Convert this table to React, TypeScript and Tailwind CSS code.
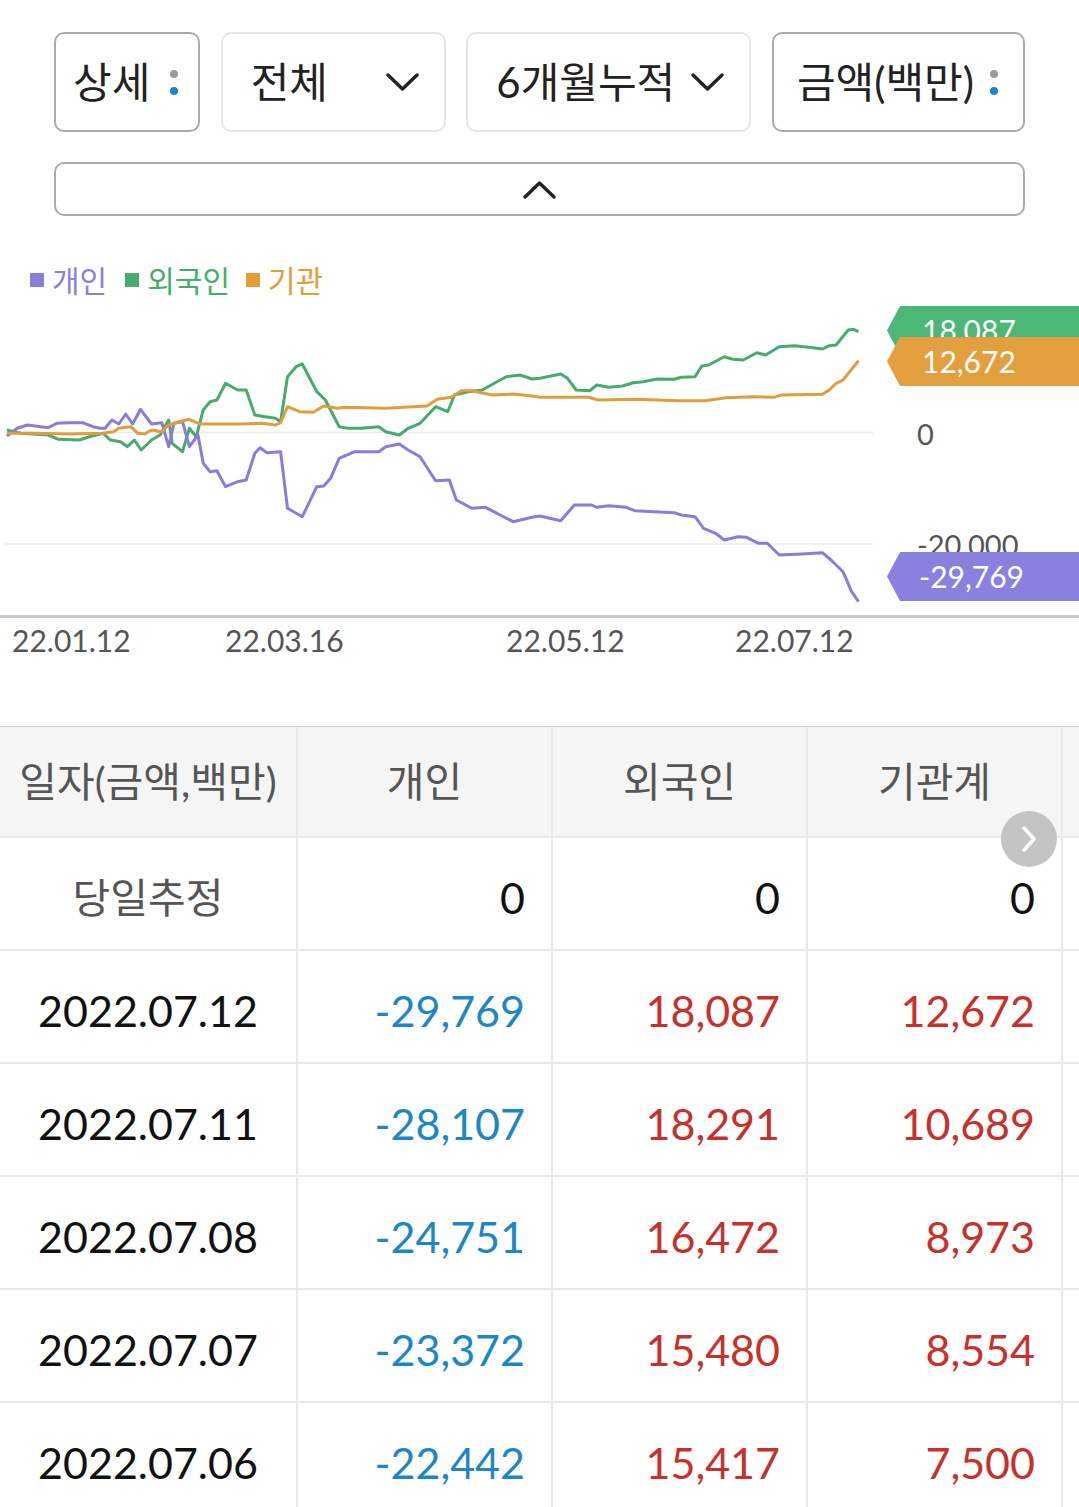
import React from "react";

const FONT = "[font-family:Lato,'Noto_Sans_CJK_KR',sans-serif]";

// chart points read off the screenshot, left half and right half
const greenL = [[20,390],[60,400],[140,405],[170,418],[230,420],[260,410],[300,400],[320,420],[350,425],[370,440],[390,420],[410,450],[440,420],[465,405],[490,360],[500,430],[530,455],[550,385],[570,410],[590,330],[610,305],[630,300],[655,250],[690,270],[715,270],[740,345],[770,350],[800,355],[815,365],[835,230],[860,200],[878,192],[920,275],[945,300],[985,380],[1010,385],[1050,385],[1100,380],[1120,395],[1160,405],[1185,385],[1220,370],[1265,320],[1300,335],[1320,285],[1360,275],[1400,270],[1470,230],[1510,225],[1545,237]];
const greenR = [[0,235],[60,222],[80,235],[105,270],[145,272],[165,255],[200,262],[240,258],[270,248],[300,245],[340,237],[390,238],[410,232],[450,230],[470,198],[490,195],[535,170],[560,178],[590,180],[630,158],[655,165],[695,140],[740,137],[780,142],[820,147],[840,137],[860,135],[895,90],[910,88],[925,95]];
const orangeL = [[20,400],[100,400],[200,402],[300,400],[330,395],[345,385],[380,380],[400,400],[420,402],[440,390],[470,395],[490,375],[520,365],[550,358],[580,372],[700,372],[760,370],[800,375],[815,368],[835,320],[870,335],[910,337],[940,318],[980,325],[1000,322],[1120,325],[1240,318],[1270,298],[1310,292],[1340,272],[1370,272],[1430,285],[1490,282],[1545,288]];
const orangeR = [[0,292],[140,292],[170,300],[280,298],[400,302],[480,302],[540,293],[620,290],[680,292],[700,285],[820,283],[840,270],[860,250],[880,240],[925,182]];
const purpleL = [[20,408],[50,385],[80,375],[140,383],[165,370],[200,368],[240,368],[270,380],[290,385],[305,385],[325,360],[345,372],[365,342],[385,372],[408,328],[440,372],[470,368],[490,440],[505,370],[530,365],[550,440],[575,405],[590,490],[610,515],[630,512],[655,560],[690,545],[715,540],[740,460],[755,443],[775,458],[815,455],[835,625],[878,650],[920,560],[940,558],[960,535],[985,475],[1030,455],[1100,455],[1120,440],[1160,432],[1185,450],[1220,470],[1265,542],[1305,540],[1325,600],[1370,625],[1410,622],[1490,665],[1545,652]];
const purpleR = [[0,648],[60,662],[100,615],[150,615],[165,622],[200,617],[250,622],[275,632],[390,638],[410,645],[450,650],[475,685],[510,700],[535,720],[575,710],[600,712],[635,730],[660,730],[695,765],[760,762],[820,758],[845,780],[880,815],[905,875],[925,905]];

const pts = (l: number[][], r: number[][]) =>
  [...l.map(([x, y]) => [x / 2.904, y / 3]), ...r.map(([x, y]) => [540 + x / 2.904, y / 3])]
    .map(([x, y]) => `${x.toFixed(1)},${y.toFixed(1)}`)
    .join(" ");

const rows = [
  ["2022.07.12", "-29,769", "18,087", "12,672"],
  ["2022.07.11", "-28,107", "18,291", "10,689"],
  ["2022.07.08", "-24,751", "16,472", "8,973"],
  ["2022.07.07", "-23,372", "15,480", "8,554"],
  ["2022.07.06", "-22,442", "15,417", "7,500"],
];

const Dots = () => (
  <div className="flex flex-col gap-[9px]">
    <span className="h-[8px] w-[8px] rounded-full bg-[#9a9a9a]" />
    <span className="h-[8px] w-[8px] rounded-full bg-[#1f80d6]" />
  </div>
);

const Chevron = ({ up = false }: { up?: boolean }) => (
  <svg width="33" height="19" viewBox="0 0 33 19" fill="none">
    <path
      d={up ? "M2 17 L16.5 3 L31 17" : "M2 2 L16.5 16 L31 2"}
      stroke="#222"
      strokeWidth="3.4"
      strokeLinecap="round"
      strokeLinejoin="round"
    />
  </svg>
);

const Tag = ({ top, bg, pl, children }: { top: string; bg: string; pl: string; children: React.ReactNode }) => (
  <div
    className={`absolute left-[887px] right-0 flex h-[49px] items-center text-[30px] text-white [clip-path:polygon(13px_0,100%_0,100%_100%,13px_100%,0_50%)] ${top} ${bg} ${pl}`}
  >
    {children}
  </div>
);

const cell = "flex h-[113px] items-center border-b-2 border-r-2 border-[#e9e9e9] pt-[7px]";

export default function App() {
  return (
    <div className={`w-[1079px] overflow-hidden bg-white ${FONT}`}>
      {/* filters */}
      <div className="flex justify-between px-[54px] pt-[32px] text-[42px] leading-none text-[#222]">
        <div className="flex h-[100px] w-[146px] items-center gap-[20px] rounded-[10px] border-2 border-[#ababab] pl-[17px]">
          <span>상세</span>
          <Dots />
        </div>
        <div className="flex h-[100px] w-[225px] items-center justify-between rounded-[10px] border-2 border-[#e6e6e6] pl-[28px] pr-[25px]">
          <span>전체</span>
          <Chevron />
        </div>
        <div className="flex h-[100px] w-[285px] items-center justify-between rounded-[10px] border-2 border-[#e6e6e6] pl-[28px] pr-[25px]">
          <span>6개월누적</span>
          <Chevron />
        </div>
        <div className="flex h-[100px] w-[253px] items-center gap-[16px] rounded-[10px] border-2 border-[#ababab] pl-[23px]">
          <span>금액(백만)</span>
          <Dots />
        </div>
      </div>
      <div className="mx-[54px] mt-[30px] flex h-[54px] items-center justify-center rounded-[10px] border-2 border-[#ababab]">
        <Chevron up />
      </div>

      {/* legend */}
      <div className="mt-[49px] flex h-[30px] items-center pl-[30px] text-[30px] leading-none">
        <span className="h-[14px] w-[14px] bg-[#8a7fdc]" />
        <span className="ml-[8px] text-[#8a7fdc]">개인</span>
        <span className="ml-[18px] h-[14px] w-[14px] bg-[#44ad6d]" />
        <span className="ml-[8px] text-[#44ad6d]">외국인</span>
        <span className="ml-[16px] h-[14px] w-[14px] bg-[#e39c38]" />
        <span className="ml-[8px] text-[#e39c38]">기관</span>
      </div>

      {/* chart */}
      <div className="relative mt-[5px] h-[426px]">
        <svg width="1079" height="426" viewBox="0 0 1079 426" className="block">
          <line x1="5" x2="873" y1="132.5" y2="132.5" stroke="#ececec" strokeWidth="1.5" />
          <line x1="5" x2="873" y1="244" y2="244" stroke="#ececec" strokeWidth="1.5" />
          <polyline points={pts(greenL, greenR)} fill="none" stroke="#47ab6e" strokeWidth="3" strokeLinejoin="round" />
          <polyline points={pts(purpleL, purpleR)} fill="none" stroke="#8a7cdc" strokeWidth="3" strokeLinejoin="round" />
          <polyline points={pts(orangeL, orangeR)} fill="none" stroke="#e09d3c" strokeWidth="3" strokeLinejoin="round" />
          <line x1="0" x2="1079" y1="316.5" y2="316.5" stroke="#cacaca" strokeWidth="3" />
          <g fill="#555" fontSize="29">
            <text x="917" y="133" dominantBaseline="central">0</text>
            <text x="917" y="244" dominantBaseline="central">-20,000</text>
          </g>
          <g fill="#555" fontSize="30">
            <text x="12" y="340" dominantBaseline="central">22.01.12</text>
            <text x="225" y="340" dominantBaseline="central">22.03.16</text>
            <text x="506" y="340" dominantBaseline="central">22.05.12</text>
            <text x="735" y="340" dominantBaseline="central">22.07.12</text>
          </g>
        </svg>
        <Tag top="top-[6px]" bg="bg-[#4cb776]" pl="pl-[35px]">18,087</Tag>
        <Tag top="top-[37px]" bg="bg-[#e39f3e]" pl="pl-[35px]">12,672</Tag>
        <Tag top="top-[252px]" bg="bg-[#8b80de]" pl="pl-[32px]">-29,769</Tag>
      </div>

      {/* table */}
      <div className="relative border-t-[1.5px] border-[#cfcfcf]">
        <div className="grid grid-cols-[298px_255px_255px_255px_255px] text-[43px] leading-none">
          {["일자(금액,백만)", "개인", "외국인", "기관계", ""].map((h, i) => (
            <div
              key={i}
              className="flex h-[111px] items-center justify-center border-b-2 border-r-2 border-[#e9e9e9] bg-[#f5f5f5] text-[41px] text-[#555]"
            >
              {h}
            </div>
          ))}
          <div className={`${cell} justify-center text-[41px] text-[#555]`}>당일추정</div>
          {["0", "0", "0"].map((v, i) => (
            <div key={i} className={`${cell} justify-end pr-[26px] text-[#111]`}>
              {v}
            </div>
          ))}
          <div className="h-[113px] border-b-2 border-[#e9e9e9]" />
          {rows.map((r) => (
            <React.Fragment key={r[0]}>
              <div className={`${cell} justify-center text-[#111]`}>{r[0]}</div>
              <div className={`${cell} justify-end pr-[26px] text-[#1d86c6]`}>{r[1]}</div>
              <div className={`${cell} justify-end pr-[26px] text-[#c8302b]`}>{r[2]}</div>
              <div className={`${cell} justify-end pr-[26px] text-[#c8302b]`}>{r[3]}</div>
              <div className="h-[113px] border-b-2 border-[#e9e9e9]" />
            </React.Fragment>
          ))}
        </div>
        <div className="absolute left-[1001px] top-[84px] flex h-[56px] w-[56px] items-center justify-center rounded-full bg-[#c4c4c4]">
          <svg width="20" height="30" viewBox="0 0 20 30" fill="none">
            <path d="M5 4 L15 15 L5 26" stroke="#fff" strokeWidth="3.5" strokeLinecap="round" strokeLinejoin="round" />
          </svg>
        </div>
      </div>
    </div>
  );
}
